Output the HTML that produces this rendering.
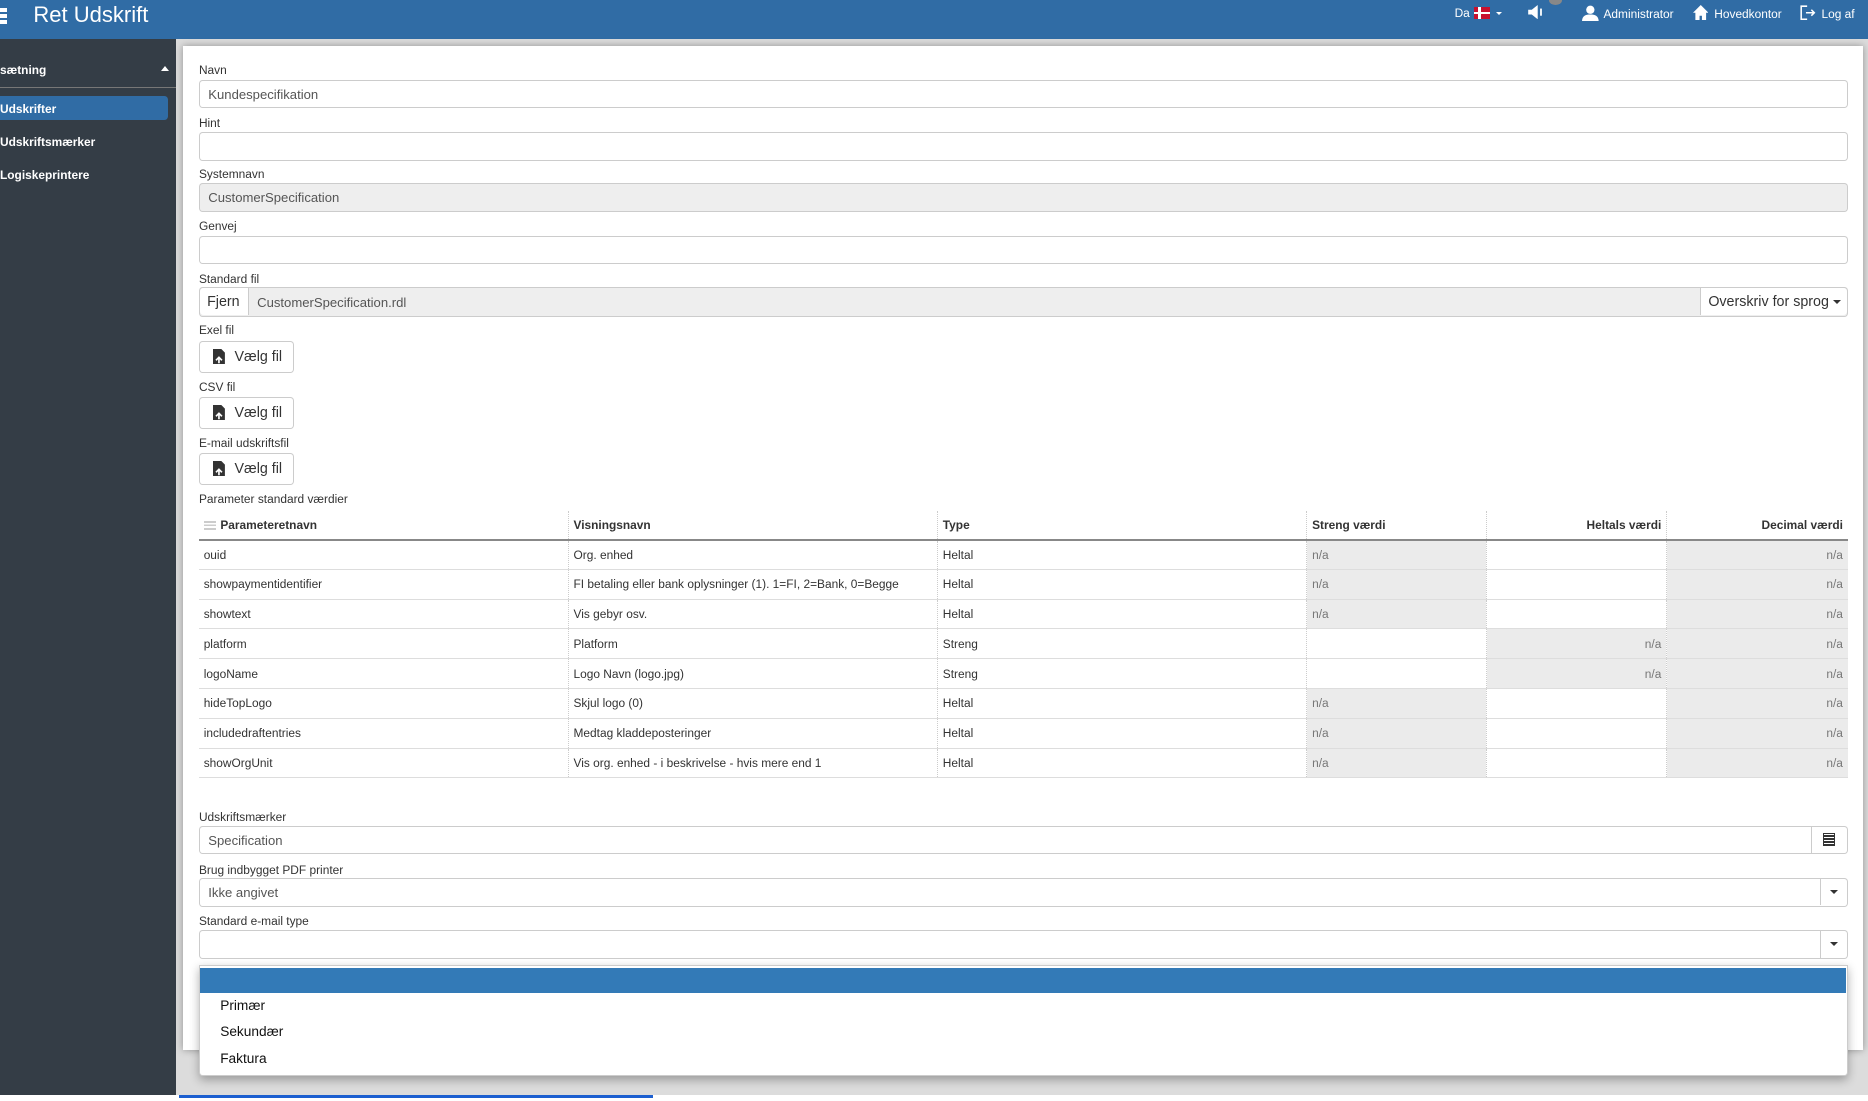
<!DOCTYPE html>
<html><head><meta charset="utf-8"><style>
*{box-sizing:border-box;margin:0;padding:0}
html,body{width:1868px;height:1101px;overflow:hidden}
body{background:#dcdcdc;font-family:"Liberation Sans",Arial,sans-serif;color:#333}
#z{zoom:1.1913;position:relative;width:1568px;height:924px}
.a{position:absolute}
.hdr{left:0;top:0;width:1568px;height:33px;background:#306ca5;color:#fff}
.side{left:0;top:33px;width:148px;height:886px;background:#343d46;color:#fff;font-size:10px;font-weight:bold}
.panel{left:154px;top:39px;width:1410px;height:842px;background:#fff;box-shadow:0 0 6px rgba(0,0,0,.35)}
.lbl{font-size:10px;color:#333;left:167px}
.inp{left:167px;width:1384px;height:24px;border:1px solid #ccc;border-radius:3px;background:#fff;font-size:11px;color:#555;padding:5px 7px}
.gray{background:#eee}
.btn{left:167px;width:80px;height:27px;border:1px solid #ccc;border-radius:3px;background:#fff;font-size:12px;color:#333;padding:6px 0 0 29px}
.btn svg{position:absolute;left:11px;top:6px}
table{border-collapse:collapse;font-size:10px;table-layout:fixed}
td,th{height:25px;padding:0 4px;border-bottom:1px solid #ddd;text-align:left;white-space:nowrap;overflow:hidden}
th{height:24px;border-bottom:2px solid #888;font-weight:bold}
td+td,th+th{border-left:1px dotted #ccc}
.g{background:#ebebeb;color:#777}
.r{text-align:right}
.caret{display:inline-block;width:0;height:0;border-left:3.5px solid transparent;border-right:3.5px solid transparent;border-top:4px solid #333;vertical-align:middle}
.sel{position:absolute;right:0;top:0;width:22px;height:22px;border-left:1px solid #ccc}
.sel .caret{position:absolute;left:7px;top:9px}
</style></head><body><div id="z">
<div class="a hdr">
 <div class="a" style="left:0;top:7px;width:6px;height:3px;background:#fff"></div>
 <div class="a" style="left:0;top:12px;width:6px;height:3px;background:#fff"></div>
 <div class="a" style="left:0;top:17px;width:6px;height:3px;background:#fff"></div>
 <div class="a" style="left:28px;top:2px;font-size:18.5px">Ret Udskrift</div>
 <div class="a" style="left:1221px;top:5px;font-size:10px">Da</div>
 <div class="a" style="left:1237px;top:6px;width:14px;height:10px;background:#c8102e"><div class="a" style="left:4px;top:0;width:2px;height:10px;background:#fff"></div><div class="a" style="left:0;top:4px;width:14px;height:2px;background:#fff"></div></div>
 <div class="a" style="left:1256px;top:10px;border-left:3px solid transparent;border-right:3px solid transparent;border-top:3px solid #fff"></div>
 <svg class="a" style="left:1282px;top:4px" width="16" height="12" viewBox="0 0 16 12"><path d="M1 4h3l5-4v12l-5-4H1z" fill="#fff"/><rect x="11" y="3" width="1.5" height="6" fill="#fff"/></svg>
 <div class="a" style="left:1300px;top:-4px;width:11px;height:8px;border-radius:50%;background:#888"></div>
 <svg class="a" style="left:1328px;top:4px" width="14" height="14" viewBox="0 0 14 14"><circle cx="7" cy="4" r="3.5" fill="#fff"/><path d="M0 14c0-5 3-6 7-6s7 1 7 6z" fill="#fff"/></svg>
 <div class="a" style="left:1346px;top:6px;font-size:10px">Administrator</div>
 <svg class="a" style="left:1421px;top:4px" width="13" height="13" viewBox="0 0 13 13"><path d="M6.5 0L0 6.5h2V13h3.5V9h2v4H11V6.5h2z" fill="#fff"/></svg>
 <div class="a" style="left:1439px;top:6px;font-size:10px">Hovedkontor</div>
 <svg class="a" style="left:1511px;top:4px" width="14" height="13" viewBox="0 0 14 13"><path d="M6 1H1v11h5" stroke="#fff" fill="none" stroke-width="1.3"/><path d="M5 6.5h7M9.5 4l2.5 2.5L9.5 9" stroke="#fff" fill="none" stroke-width="1.3"/></svg>
 <div class="a" style="left:1529px;top:6px;font-size:10px">Log af</div>
</div>
<div class="a side">
 <div class="a" style="left:0;top:20px">sætning</div>
 <div class="a" style="left:135px;top:22px;border-left:4px solid transparent;border-right:4px solid transparent;border-bottom:5px solid #fff"></div>
 <div class="a" style="left:0;top:40px;width:148px;height:1px;background:#777"></div>
 <div class="a" style="left:0;top:48px;width:141px;height:20px;background:#306ca5;border-radius:0 3px 3px 0"></div>
 <div class="a" style="left:0;top:53px">Udskrifter</div>
 <div class="a" style="left:0;top:80px">Udskriftsmærker</div>
 <div class="a" style="left:0;top:108px">Logiskeprintere</div>
</div>
<div class="a" style="left:0;top:919px;width:1568px;height:5px;background:#fff"></div>
<div class="a" style="left:150px;top:919px;width:398px;height:3px;background:#1c5fd0"></div>
<div class="a panel"></div>

<div class="a lbl" style="top:53px">Navn</div>
<div class="a inp" style="top:67px">Kundespecifikation</div>
<div class="a lbl" style="top:97px">Hint</div>
<div class="a inp" style="top:111px"></div>
<div class="a lbl" style="top:140px">Systemnavn</div>
<div class="a inp gray" style="top:154px">CustomerSpecification</div>
<div class="a lbl" style="top:184px">Genvej</div>
<div class="a inp" style="top:198px"></div>
<div class="a lbl" style="top:228px">Standard fil</div>
<div class="a inp gray" style="top:241px;height:25px;padding:0">
 <div class="a" style="left:0;top:0;width:41px;height:23px;background:#fff;border-right:1px solid #ccc;font-size:12px;color:#333;padding:5px 0 0 6px;border-radius:3px 0 0 3px">Fjern</div>
 <div class="a" style="left:48px;top:6px">CustomerSpecification.rdl</div>
 <div class="a" style="right:0;top:0;width:123px;height:23px;background:#fff;border-left:1px solid #ccc;font-size:12px;color:#333;padding:5px 0 0 6px;border-radius:0 3px 3px 0">Overskriv for sprog <span class="caret"></span></div>
</div>
<div class="a lbl" style="top:271px">Exel fil</div>
<div class="a btn" style="top:286px"><svg width="11" height="13" viewBox="0 0 11 13"><path d="M0 0h7l3 3v10H0z" fill="#333"/><path d="M5 12V7M2.5 9.5L5 7l2.5 2.5" stroke="#fff" stroke-width="1.4" fill="none"/></svg>Vælg fil</div>
<div class="a lbl" style="top:319px">CSV fil</div>
<div class="a btn" style="top:333px"><svg width="11" height="13" viewBox="0 0 11 13"><path d="M0 0h7l3 3v10H0z" fill="#333"/><path d="M5 12V7M2.5 9.5L5 7l2.5 2.5" stroke="#fff" stroke-width="1.4" fill="none"/></svg>Vælg fil</div>
<div class="a lbl" style="top:366px">E-mail udskriftsfil</div>
<div class="a btn" style="top:380px"><svg width="11" height="13" viewBox="0 0 11 13"><path d="M0 0h7l3 3v10H0z" fill="#333"/><path d="M5 12V7M2.5 9.5L5 7l2.5 2.5" stroke="#fff" stroke-width="1.4" fill="none"/></svg>Vælg fil</div>
<div class="a lbl" style="top:413px">Parameter standard værdier</div>

<table class="a" style="left:167px;top:429px;width:1384px">
<colgroup><col style="width:310px"><col style="width:310px"><col style="width:310px"><col style="width:151px"><col style="width:151px"><col style="width:152px"></colgroup>
<tr><th><span style="display:inline-block;width:10px;height:8px;border-top:2px solid #ccc;border-bottom:2px solid #ccc;vertical-align:middle;margin-right:4px;background:linear-gradient(#fff 30%,#ccc 30%,#ccc 60%,#fff 60%)"></span>Parameteretnavn</th><th>Visningsnavn</th><th>Type</th><th>Streng værdi</th><th class="r">Heltals værdi</th><th class="r">Decimal værdi</th></tr>
<tr><td>ouid</td><td>Org. enhed</td><td>Heltal</td><td class="g">n/a</td><td></td><td class="g r">n/a</td></tr>
<tr><td>showpaymentidentifier</td><td>FI betaling eller bank oplysninger (1). 1=FI, 2=Bank, 0=Begge</td><td>Heltal</td><td class="g">n/a</td><td></td><td class="g r">n/a</td></tr>
<tr><td>showtext</td><td>Vis gebyr osv.</td><td>Heltal</td><td class="g">n/a</td><td></td><td class="g r">n/a</td></tr>
<tr><td>platform</td><td>Platform</td><td>Streng</td><td></td><td class="g r">n/a</td><td class="g r">n/a</td></tr>
<tr><td>logoName</td><td>Logo Navn (logo.jpg)</td><td>Streng</td><td></td><td class="g r">n/a</td><td class="g r">n/a</td></tr>
<tr><td>hideTopLogo</td><td>Skjul logo (0)</td><td>Heltal</td><td class="g">n/a</td><td></td><td class="g r">n/a</td></tr>
<tr><td>includedraftentries</td><td>Medtag kladdeposteringer</td><td>Heltal</td><td class="g">n/a</td><td></td><td class="g r">n/a</td></tr>
<tr><td>showOrgUnit</td><td>Vis org. enhed - i beskrivelse - hvis mere end 1</td><td>Heltal</td><td class="g">n/a</td><td></td><td class="g r">n/a</td></tr>
</table>

<div class="a lbl" style="top:680px">Udskriftsmærker</div>
<div class="a inp" style="top:693px">Specification
 <div class="a" style="right:0;top:0;width:30px;height:22px;border-left:1px solid #ccc"><div class="a" style="left:9px;top:5px;width:10px;height:11px;border:1.5px solid #333;background:repeating-linear-gradient(#fff 0 1px,#333 1px 2.5px)"></div></div></div>
<div class="a lbl" style="top:724px">Brug indbygget PDF printer</div>
<div class="a inp" style="top:737px">Ikke angivet
 <div class="sel"><span class="caret"></span></div></div>
<div class="a lbl" style="top:767px">Standard e-mail type</div>
<div class="a inp" style="top:781px">
 <div class="sel"><span class="caret"></span></div></div>
<div class="a" style="left:1549px;top:838px;width:2px;height:24px;background:#3a9a3a"></div>
<div class="a" style="left:167px;top:810px;width:1384px;height:93px;background:#fff;border:1px solid #ccc;border-radius:0 0 3px 3px;box-shadow:0 3px 8px rgba(0,0,0,.3);font-size:11.5px;color:#111">
 <div class="a" style="left:0;top:2px;width:1382px;height:21px;background:#337ab7"></div>
 <div class="a" style="left:17px;top:27px">Primær</div>
 <div class="a" style="left:17px;top:49px">Sekundær</div>
 <div class="a" style="left:17px;top:71px">Faktura</div>
</div>
</div></body></html>
